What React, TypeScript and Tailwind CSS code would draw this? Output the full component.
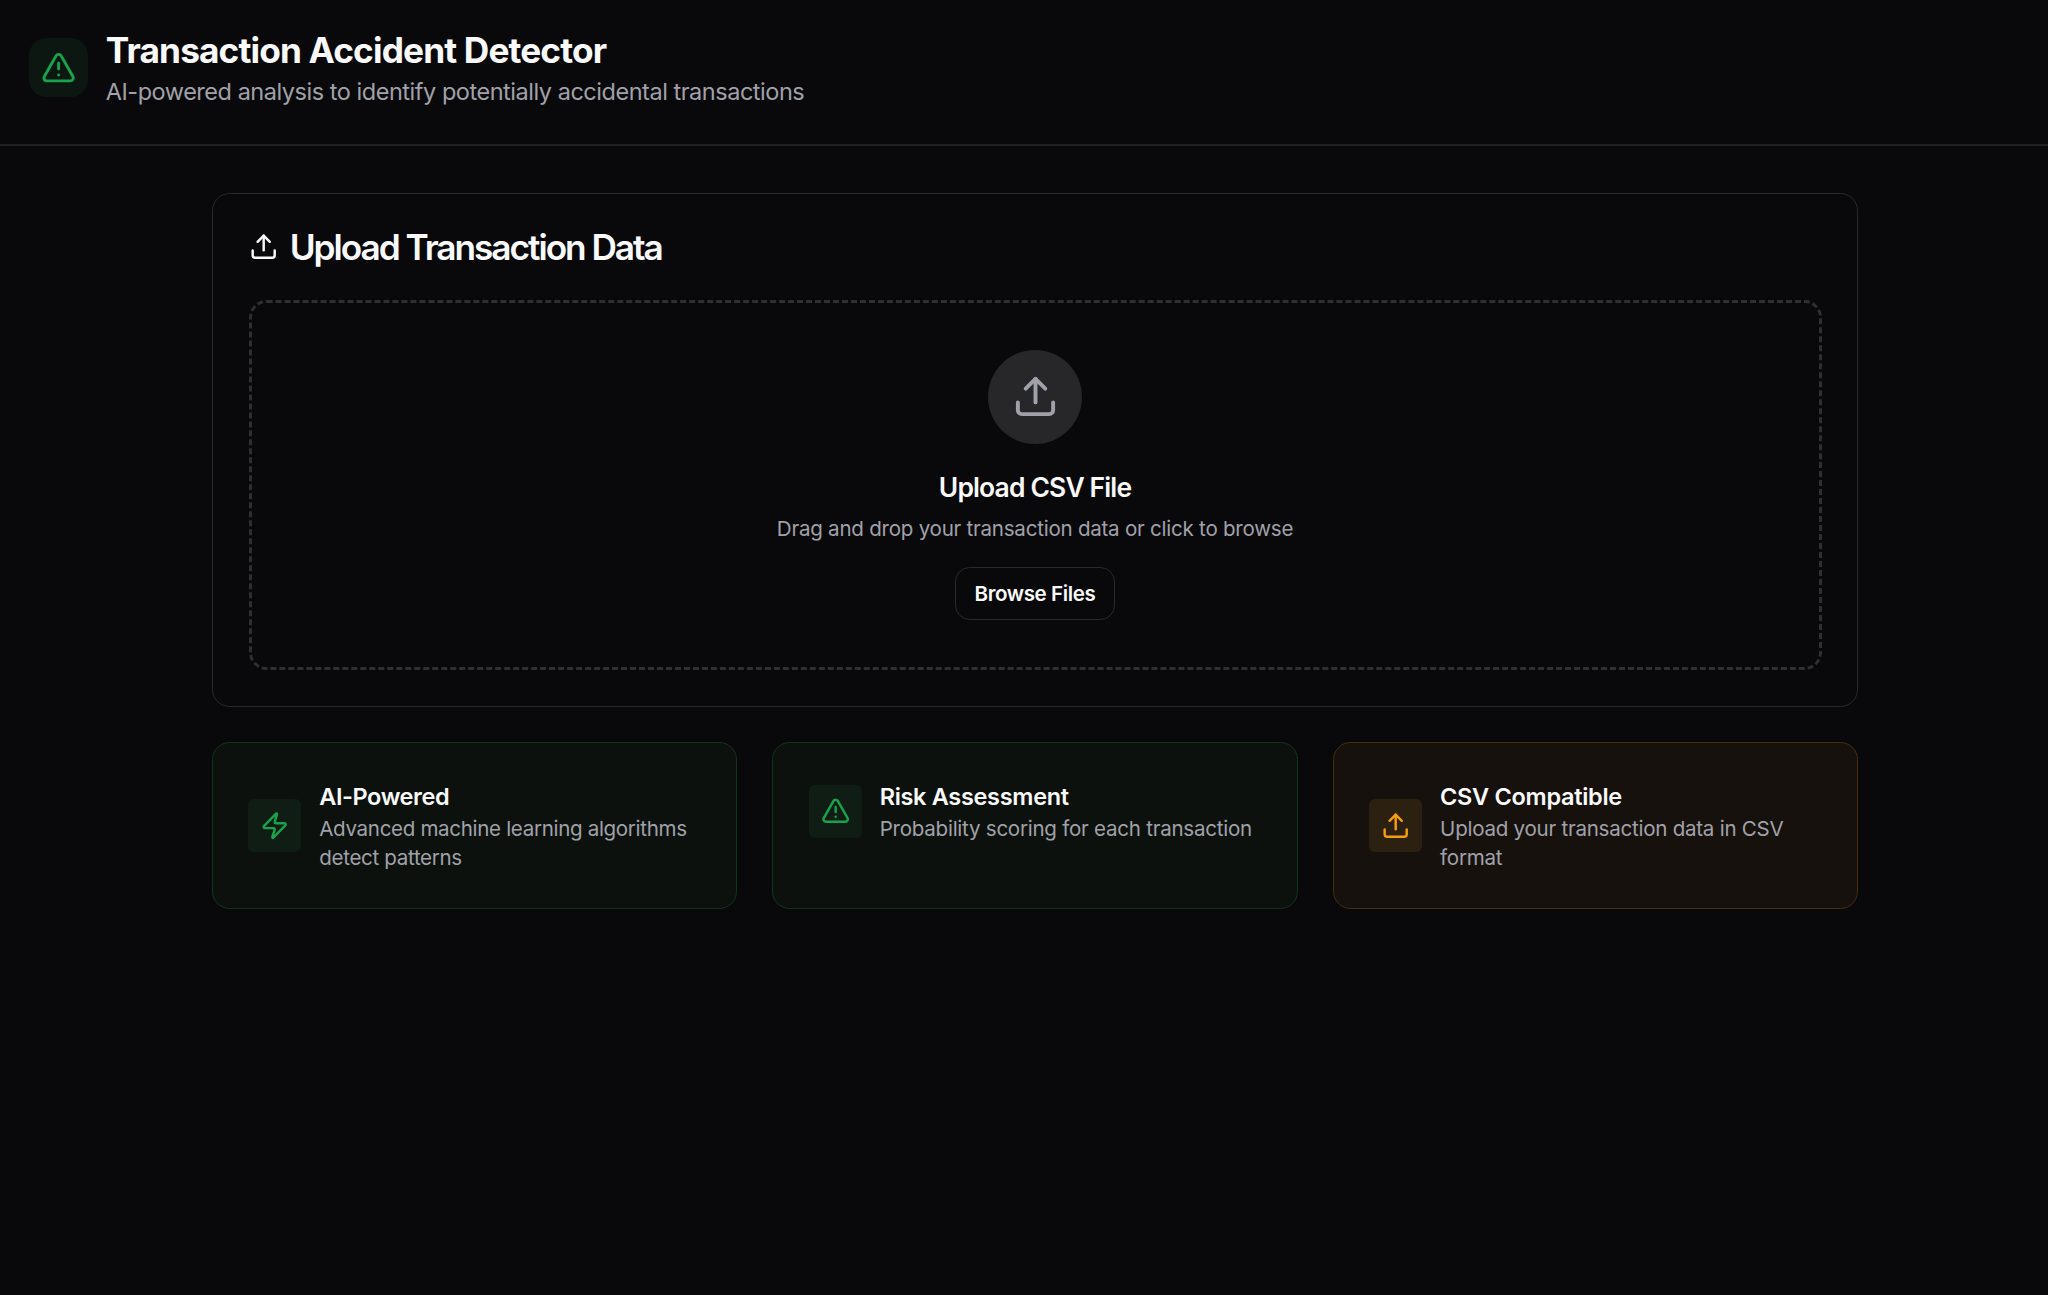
import { TriangleAlert, Upload, Zap } from "lucide-react";

const features = [
  {
    title: "AI-Powered",
    text: "Advanced machine learning algorithms detect patterns",
    Icon: Zap,
    card: "border-[#13351e] bg-[#0c110d]",
    badge: "bg-[#0f1d14] text-[#18a34b]",
    titleTracking: "tracking-[-0.42px]",
    textTracking: "tracking-[-0.32px]",
  },
  {
    title: "Risk Assessment",
    text: "Probability scoring for each transaction",
    Icon: TriangleAlert,
    card: "border-[#13351e] bg-[#0c110d]",
    badge: "bg-[#0f1d14] text-[#18a34b]",
    titleTracking: "tracking-[-0.32px]",
    textTracking: "tracking-[-0.25px]",
  },
  {
    title: "CSV Compatible",
    text: "Upload your transaction data in CSV format",
    Icon: Upload,
    card: "border-[#452e11] bg-[#16110d]",
    badge: "bg-[#2c2010] text-[#f59e0b]",
    titleTracking: "tracking-[-0.3px]",
    textTracking: "tracking-[-0.25px]",
  },
];

export default function App() {
  return (
    <div className="min-h-screen bg-[#09090b] font-['Inter',sans-serif] text-[#fafafa] antialiased [--radius-xl:17.6px] [--spacing:5.875px] [--text-2xl:35.25px] [--text-base:23.5px] [--text-lg:26.44px] [--text-sm:20.56px]">
      <header className="flex h-[146px] items-center gap-3 border-b-2 border-[#202022] pr-5 pb-6 pl-5 pt-[26.5px]">
        <div className="rounded-xl bg-[#0c1711] p-2 text-[#18a34b]">
          <TriangleAlert className="size-6" />
        </div>
        <div>
          <h1 className="text-2xl font-bold tracking-[-0.86px]">Transaction Accident Detector</h1>
          <p className="text-base tracking-[-0.47px] text-[#a1a1aa]">
            AI-powered analysis to identify potentially accidental transactions
          </p>
        </div>
      </header>

      <main className="ml-[212px] flex w-[1646px] flex-col gap-6 pt-[47px]">
        <section className="rounded-xl border border-[#2a2a2d] px-[35.5px] py-[35.5px]">
          <h2 className="flex items-center gap-2 text-2xl leading-none font-semibold tracking-[-2.04px]">
            <Upload className="size-5" />
            Upload Transaction Data
          </h2>
          <div className="mt-6 flex flex-col items-center rounded-xl border-3 border-dashed border-[#2f2f32] pt-[46.9px] pb-8">
            <div className="rounded-full bg-[#27272a] p-4 text-[#a1a1aa]">
              <Upload className="size-8" />
            </div>
            <h3 className="mt-4 text-lg font-semibold tracking-[-0.85px]">Upload CSV File</h3>
            <p className="mt-[5.3px] text-sm tracking-[-0.24px] text-[#a1a1aa]">
              Drag and drop your transaction data or click to browse
            </p>
            <button className="mt-6 mt-[24.1px] h-9 w-[160px] rounded-[14.7px] border border-[#2a2a2d] text-sm font-semibold tracking-[-0.4px]">
              Browse Files
            </button>
          </div>
        </section>

        <div className="grid grid-cols-3 gap-6">
          {features.map(({ title, text, Icon, card, badge, titleTracking, textTracking }) => (
            <section key={title} className={`rounded-xl border px-[35.4px] pt-[35.9px] pb-[35.5px] ${card}`}>
              <div className="flex items-center gap-[18px]">
                <div className={`rounded-[5.9px] p-2 ${badge}`}>
                  <Icon className="size-5" />
                </div>
                <div>
                  <h3 className={`text-base font-semibold ${titleTracking}`}>{title}</h3>
                  <p className={`text-sm text-[#a1a1aa] ${textTracking}`}>{text}</p>
                </div>
              </div>
            </section>
          ))}
        </div>
      </main>
    </div>
  );
}
